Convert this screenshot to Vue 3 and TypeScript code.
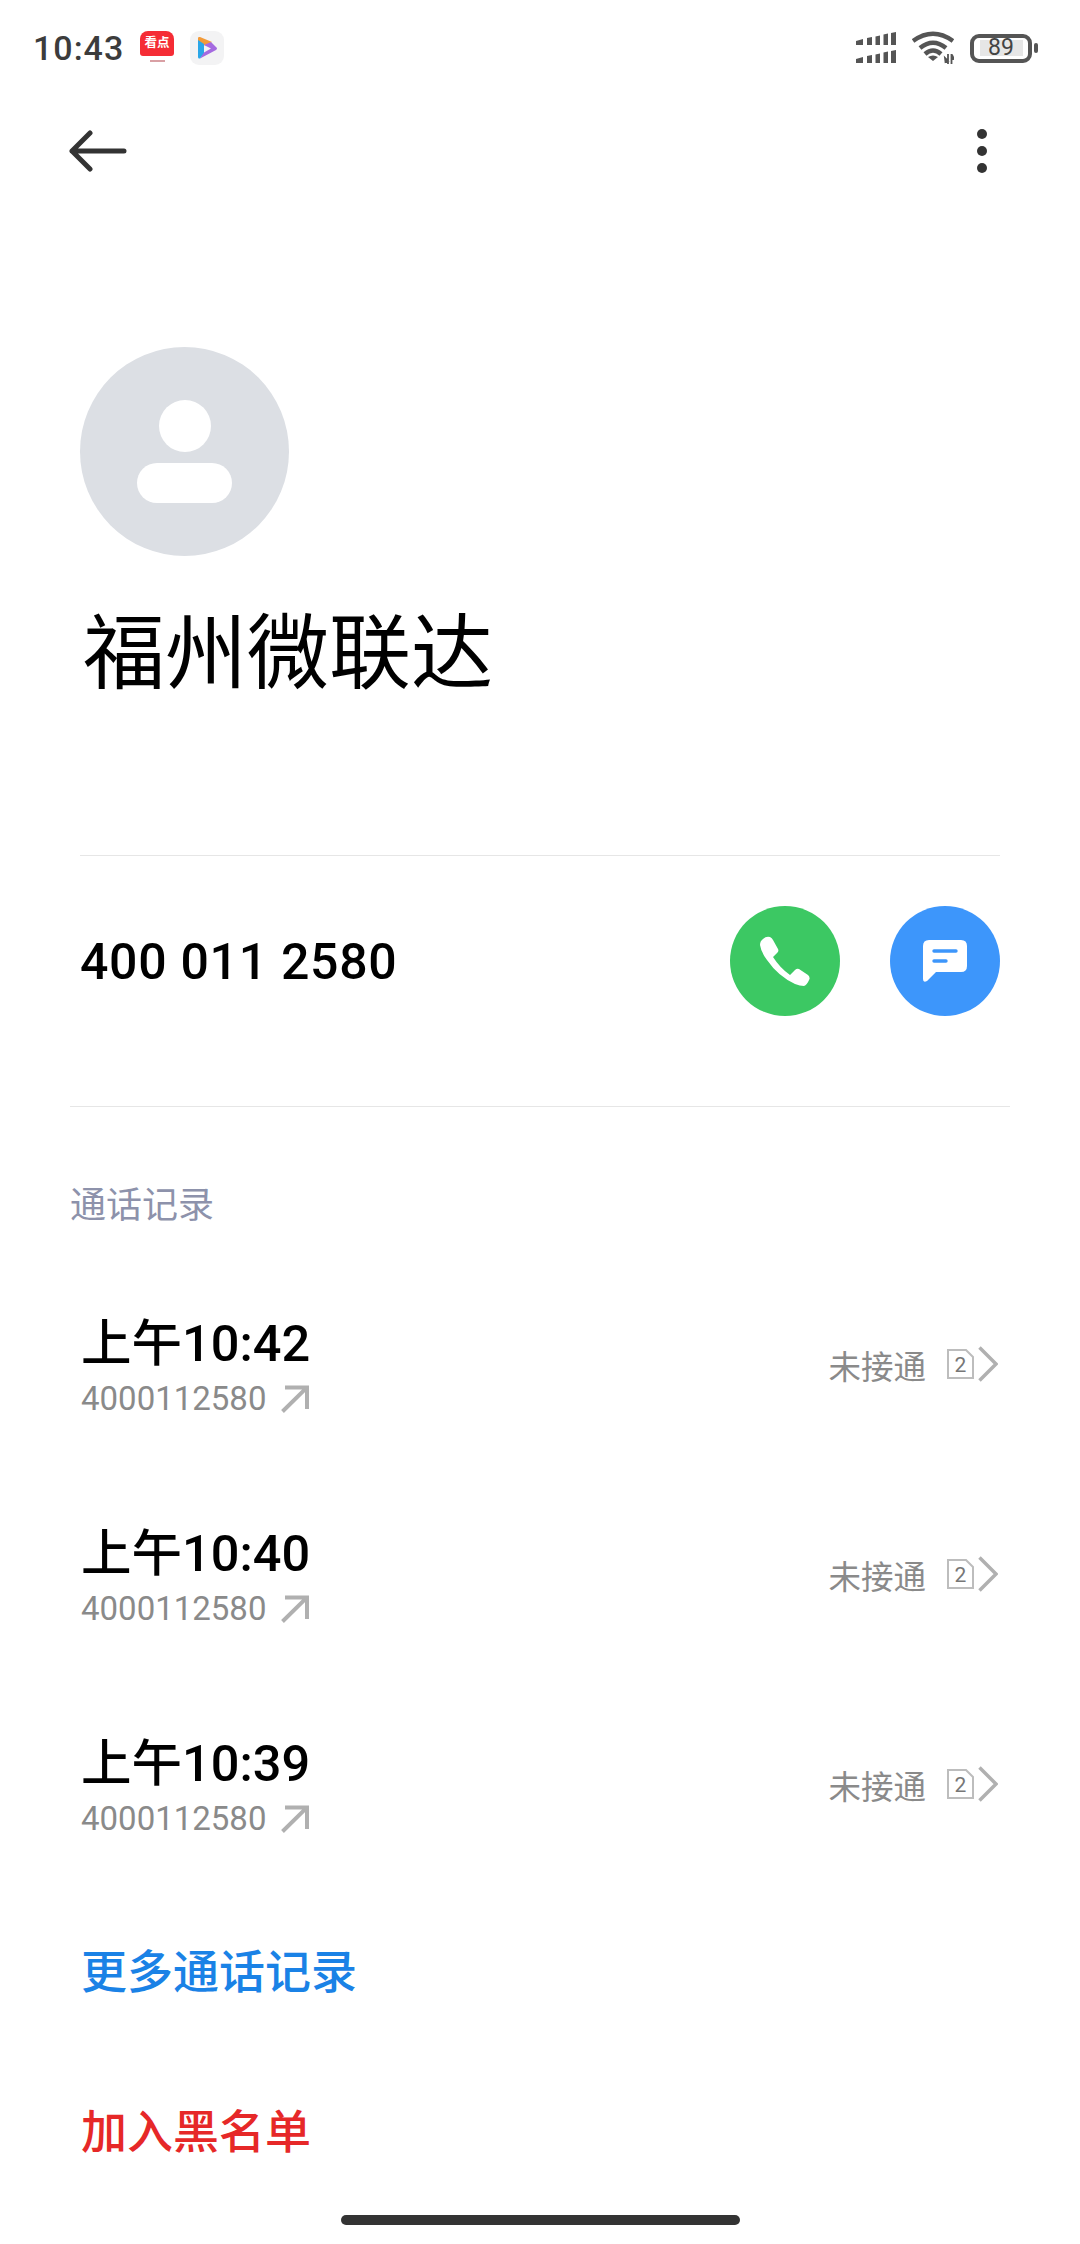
<script setup lang="ts">
interface CallRow { time: string }
const rows: CallRow[] = [{ time: '上午10:42' }, { time: '上午10:40' }, { time: '上午10:39' }]
</script>

<template>
  <div class="page">
    <div class="status">
      <span class="clock">10:43</span>
      <div class="app-red">
        <div class="app-red-top">看点</div>
        <div class="app-red-line"></div>
      </div>
      <svg class="app-play" width="34" height="34" viewBox="0 0 34 34">
        <rect width="34" height="34" rx="9" fill="#f3f3f4" />
        <path d="M8 7 Q8 5.500 10 6 L22 11 L15 14.500 L8 11 Z" fill="#f29a38" />
        <path d="M8 9 L14 13 V23 L10 27.500 Q8 28 8 26 Z" fill="#2aa6e8" />
        <path d="M14 21.500 L10 27.500 L26 19 Q28 17.500 26 16 L21 11 L14 14 L21 17.500 Z" fill="#a56ae0" />
      </svg>
      <div class="status-right">
        <svg width="40" height="32" viewBox="0 0 40 32" fill="#555">
          <g v-for="r in 2" :key="r" :transform="`translate(0 ${(r - 1) * 18})`">
            <path d="M0 9 L7 7 V13 H0Z" />
            <path d="M11 6 L16 5 V13 H11Z" />
            <path d="M19.500 4.500 L24 3.500 V13 H19.500Z" />
            <path d="M27.500 2.500 L32 1.500 V13 H27.500Z" />
            <path d="M35 1 L40 0 V13 H35Z" />
          </g>
        </svg>
        <svg class="wifi" width="42" height="34" viewBox="0 0 42 34" fill="none" stroke="#555" stroke-width="4.5">
          <path d="M1 10 Q21 -4.500 41 10" />
          <path d="M8 17 Q21 6.500 34 17" />
          <path d="M13 23 Q21 16 29 23" />
          <path d="M21 30 L16 26 Q21 23 26 26 Z" fill="#555" stroke="none" />
          <path d="M36 23 V33 M33 27 L33.500 31 L36 30Z M39.500 23 V33 M40 24 L42 28 L40 28Z" stroke-width="1.800" />
        </svg>
        <div class="battery">
          <div class="cell"><span>89</span></div>
          <div class="nub"></div>
        </div>
      </div>
    </div>

    <div class="topbar">
      <svg width="60" height="42" viewBox="0 0 60 42" fill="none" stroke="#333" stroke-width="5" stroke-linecap="round" stroke-linejoin="round">
        <path d="M56 21 H4 M22 3 L4 21 L22 39" />
      </svg>
      <div class="dots"><i></i><i></i><i></i></div>
    </div>

    <div class="profile">
      <div class="avatar">
        <div class="head"></div>
        <div class="body"></div>
      </div>
      <div class="name">福州微联达</div>
    </div>

    <div class="phone-block">
      <div class="phone">
        <span class="number">400 011 2580</span>
        <div class="actions">
          <div class="round green">
            <svg width="50" height="50" viewBox="0 0 50 50" fill="#fff">
              <path d="M3 3 Q6 0 10 1 Q12 2 13 4 L18 13 Q19 15 17.500 16.500 L13 21 Q20 32 30 39 L35 34 Q37 32 39 33 L48 39 Q50 41 49.500 43 Q47 49 44 50 Q40 50 35 48 Q18 40 7 24 Q1 16 0 9 Q0 5 3 3Z" />
            </svg>
          </div>
          <div class="round blue">
            <svg width="44" height="42" viewBox="0 0 44 42" fill="#fff">
              <path d="M6 0 H38 Q44 0 44 6 V26 Q44 32 38 32 H13 L4 41 Q0 43 0 39 V6 Q0 0 6 0 Z" />
              <path d="M11 11 H33 M11 21 H23" stroke="#3d96fb" stroke-width="3.400" stroke-linecap="round" />
            </svg>
          </div>
        </div>
      </div>
    </div>

    <div class="section">通话记录</div>

    <div class="calls">
      <div v-for="row in rows" :key="row.time" class="call">
        <div class="call-left">
          <div class="time">{{ row.time }}</div>
          <div class="sub">
            <span>4000112580</span>
            <svg width="28" height="28" viewBox="0 0 28 28" fill="none" stroke="#b0b0b0" stroke-width="4">
              <path d="M1.500 26.500 L25.500 2.800 M4 2.500 H26 V24" />
            </svg>
          </div>
        </div>
        <div class="call-right">
          <span class="state">未接通</span>
          <svg class="sim" width="27" height="30" viewBox="0 0 27 30">
            <path d="M1 1 H19 L26 8 V29 H1Z" fill="none" stroke="#bdbdbd" stroke-width="2" />
            <text x="13.500" y="22.500" text-anchor="middle" font-size="21" fill="#777">2</text>
          </svg>
          <svg class="chev" width="20" height="36" viewBox="0 0 20 36" fill="none" stroke="#b0b0b0" stroke-width="3.500">
            <path d="M1.500 1.500 L18 18 L1.500 34.500" />
          </svg>
        </div>
      </div>
    </div>

    <div class="link more">更多通话记录</div>
    <div class="link block">加入黑名单</div>

    <div class="home-wrap"><div class="home"></div></div>
  </div>
</template>

<style>
html, body { margin: 0; background: #fff; }
</style>

<style scoped>
.page {
  width: 1080px;
  height: 2244px;
  background: #fff;
  overflow: hidden;
  display: flex;
  flex-direction: column;
  font-family: Roboto, "Noto Sans CJK SC", sans-serif;
  color: #000;
}
.status {
  height: 96px;
  display: flex;
  align-items: center;
  padding: 0 42px 0 33px;
  box-sizing: border-box;
}
.clock {
  font-size: 34px;
  font-weight: 500;
  color: #3c3c3c;
  letter-spacing: 1px;
  width: 107px;
}
.app-red {
  width: 34px;
  height: 34px;
  display: flex;
  flex-direction: column;
  align-items: center;
}
.app-red-top {
  width: 34px;
  height: 25px;
  background: #f52c35;
  border-radius: 8px 8px 3px 3px;
  color: #fff;
  font-size: 12.500px;
  font-weight: 700;
  line-height: 24px;
  text-align: center;
}
.app-red-line {
  width: 15px;
  height: 1.500px;
  margin-top: 4px;
  background: #d9a0a4;
}
.app-play { margin-left: 16px; }
.status-right {
  margin-left: auto;
  display: flex;
  align-items: center;
}
.wifi { margin-left: 16px; }
.battery {
  margin-left: 16px;
  display: flex;
  align-items: center;
}
.cell {
  width: 62px;
  height: 29px;
  box-sizing: border-box;
  border: 4px solid #555;
  border-radius: 9px;
  display: flex;
  align-items: center;
  justify-content: center;
}
.cell span {
  background: #e6e6e6;
  width: 43px;
  text-align: center;
  font-size: 23px;
  line-height: 16px;
  color: #444;
}
.nub {
  width: 4px;
  height: 10px;
  background: #555;
  border-radius: 2px;
  margin-left: 2px;
}
.topbar {
  height: 110px;
  display: flex;
  align-items: center;
  justify-content: space-between;
  padding: 0 93px 0 68px;
}
.dots {
  display: flex;
  flex-direction: column;
  gap: 7px;
}
.dots i {
  display: block;
  width: 10px;
  height: 10px;
  border-radius: 50%;
  background: #333;
}
.profile {
  padding: 141px 0 0 80px;
}
.avatar {
  width: 209px;
  height: 209px;
  border-radius: 50%;
  background: #dcdfe4;
  display: flex;
  flex-direction: column;
  align-items: center;
  padding-top: 53px;
  box-sizing: border-box;
}
.head {
  width: 52px;
  height: 52px;
  border-radius: 50%;
  background: #fff;
}
.body {
  width: 95px;
  height: 40px;
  border-radius: 20px;
  background: #fff;
  margin-top: 11px;
}
.name {
  font-size: 82px;
  line-height: 100px;
  margin: 48px 0 0 3px;
  font-weight: 400;
  color: #000;
}
.phone-block {
  margin: 151px 80px 0 80px;
  border-top: 1px solid #e6e6e6;
}
.phone {
  display: flex;
  align-items: center;
  justify-content: space-between;
  padding: 50px 0 0;
}
.number {
  font-size: 50px;
  font-weight: 500;
  letter-spacing: 0.7px;
  margin: 2px 0 0 0;
}
.actions {
  display: flex;
  gap: 50px;
}
.round {
  width: 110px;
  height: 110px;
  border-radius: 50%;
  display: flex;
  align-items: center;
  justify-content: center;
}
.green { background: #3cc863; }
.blue { background: #3d96fb; }
.section {
  margin: 90px 70px 0 70px;
  padding-top: 75px;
  border-top: 1px solid #e6e6e6;
  font-size: 36px;
  line-height: 48px;
  color: #8d92ab;
}
.calls {
  margin-top: 29px;
  padding: 0 82px;
}
.call {
  height: 210px;
  display: flex;
  align-items: center;
  justify-content: space-between;
}
.call-left { padding-top: 7px; }
.time {
  font-size: 50.500px;
  font-weight: 500;
  line-height: 62px;
  margin-left: -1px;
}
.sub {
  display: flex;
  align-items: center;
  gap: 15px;
  font-size: 33px;
  line-height: 46px;
  color: #8a8a8a;
  margin: 1px 0 0 -1px;
}
.call-right {
  display: flex;
  align-items: center;
}
.state {
  font-size: 32.500px;
  color: #8a8a8a;
}
.sim {
  margin-left: 21px;
  font-family: Roboto, sans-serif;
}
.chev { margin-left: 4px; }
.link {
  font-size: 46px;
  font-weight: 500;
  line-height: 60px;
  padding-left: 81px;
}
.more { color: #1a82e6; margin-top: 53px; }
.block { color: #e62828; margin-top: 100px; }
.home-wrap {
  margin-top: auto;
  padding-bottom: 19px;
  display: flex;
  justify-content: center;
}
.home {
  width: 399px;
  height: 10px;
  border-radius: 5px;
  background: #333;
}
</style>
